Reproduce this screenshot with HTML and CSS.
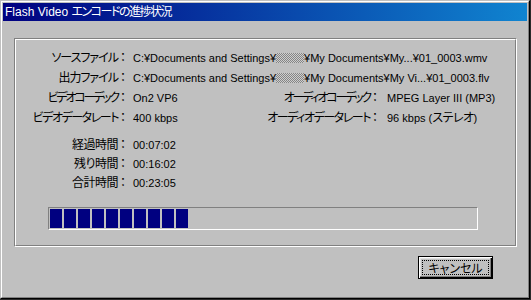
FILE: index.html
```html
<!DOCTYPE html>
<html lang="ja">
<head>
<meta charset="utf-8">
<title>Flash Video エンコードの進捗状況</title>
<link rel="stylesheet" href="styles.css">
</head>
<body>
<div class="win">
  <div class="win-in">
    <div class="title">Flash Video <span class="tk">エンコードの進捗状況</span></div>
    <div class="content">
      <div class="group">
        <div class="group-in">
          <div class="info">
            <div class="lbl"><span class="k">ソースファイル</span><span class="c">：</span></div>
            <div class="val wide">C:¥Documents and Settings¥<span class="mosaic"></span>¥My Documents¥My...¥01_0003.wmv</div>
            <div class="lbl"><span class="k">出力ファイル</span><span class="c">：</span></div>
            <div class="val wide">C:¥Documents and Settings¥<span class="mosaic"></span>¥My Documents¥My Vi...¥01_0003.flv</div>
            <div class="lbl"><span class="k codec">ビデオコーデック</span><span class="c">：</span></div>
            <div class="val">On2 VP6</div>
            <div class="lbl"><span class="k codec">オーディオコーデック</span><span class="c">：</span></div>
            <div class="val val2">MPEG Layer III (MP3)</div>
            <div class="lbl"><span class="k rate">ビデオデータレート</span><span class="c">：</span></div>
            <div class="val">400 kbps</div>
            <div class="lbl"><span class="k rate">オーディオデータレート</span><span class="c">：</span></div>
            <div class="val val2">96 kbps (<span class="k">ステレオ</span>)</div>
          </div>
          <div class="times">
            <div class="lbl"><span class="k kanji">経過時間</span><span class="c">：</span></div>
            <div class="val">00:07:02</div>
            <div class="lbl"><span class="k kanji">残り時間</span><span class="c">：</span></div>
            <div class="val">00:16:02</div>
            <div class="lbl"><span class="k kanji">合計時間</span><span class="c">：</span></div>
            <div class="val">00:23:05</div>
          </div>
          <div class="progress">
            <div class="blk"></div><div class="blk"></div><div class="blk"></div><div class="blk"></div><div class="blk"></div>
            <div class="blk"></div><div class="blk"></div><div class="blk"></div><div class="blk"></div><div class="blk"></div>
          </div>
        </div>
      </div>
      <div class="actions">
        <button class="btn"><span class="focus">キャンセル</span></button>
      </div>
    </div>
  </div>
</div>
</body>
</html>
```
FILE: styles.css
```css
html, body {
  margin: 0;
  padding: 0;
}
body {
  width: 531px;
  height: 300px;
  overflow: hidden;
  background: #2a2a2a;
  font-family: "Liberation Sans", "Noto Sans CJK JP", sans-serif;
  font-size: 11px;
  color: #000;
}
.win {
  width: 530px;
  height: 299px;
  box-sizing: border-box;
  border: 1px solid;
  border-color: #c0c0c0 #000 #000 #c0c0c0;
  background: #c0c0c0;
}
.win-in {
  height: 100%;
  box-sizing: border-box;
  border: 1px solid;
  border-color: #fff #808080 #808080 #fff;
  padding: 1px;
}
.title {
  height: 18px;
  line-height: 18px;
  padding-left: 2px;
  background: linear-gradient(to right, #000080, #1084d0);
  color: #fff;
  font-size: 12px;
  white-space: nowrap;
}
.tk {
  font-feature-settings: "palt";
  letter-spacing: -1.5px;
}
.content {
  padding: 17px 10px 0 11px;
}
.group {
  height: 209px;
  box-sizing: border-box;
  border: 1px solid;
  border-color: #808080 #fff #fff #808080;
}
.group-in {
  height: 100%;
  box-sizing: border-box;
  border: 1px solid;
  border-color: #fff #808080 #808080 #fff;
}
.info {
  margin-top: 8px;
  display: grid;
  grid-template-columns: 113px 124px 128px 1fr;
  grid-auto-rows: 20px;
  line-height: 20px;
  white-space: nowrap;
}
.times {
  margin-top: 8px;
  display: grid;
  grid-template-columns: 113px 1fr;
  grid-auto-rows: 19px;
  line-height: 19px;
}
.lbl {
  text-align: right;
  font-size: 12px;
  white-space: nowrap;
}
.k {
  font-feature-settings: "palt";
  letter-spacing: -1px;
}
.k.codec {
  letter-spacing: -2.2px;
}
.k.rate {
  letter-spacing: -1.45px;
}
.k.kanji {
  letter-spacing: -0.5px;
}
.c {
  margin-left: -1px;
}
.val {
  padding-left: 4px;
}
.val2 {
  padding-left: 6px;
}
.val .k {
  font-size: 12px;
  letter-spacing: -0.5px;
}
.wide {
  grid-column: 2 / 5;
}
.mosaic {
  display: inline-block;
  width: 28px;
  height: 10px;
  vertical-align: -1px;
  background: repeating-conic-gradient(#7a7a7a 0 25%, #d0d0d0 0 50%) 0 0 / 2px 2px;
  opacity: 0.85;
}
.progress {
  margin: 14px 0 0 32px;
  width: 430px;
  height: 23px;
  box-sizing: border-box;
  border: 1px solid;
  border-color: #808080 #fff #fff #808080;
  padding: 1px;
  display: flex;
  gap: 2px;
}
.blk {
  width: 12px;
  height: 19px;
  background: #000080;
}
.actions {
  display: flex;
  justify-content: flex-end;
  padding-right: 24px;
  margin-top: 9px;
}
.btn {
  width: 75px;
  height: 23px;
  box-sizing: border-box;
  margin: 0;
  padding: 3px;
  border: 1px solid #000;
  background: #c0c0c0;
  box-shadow: inset 1px 1px #fff, inset -1px -1px #000, inset -2px -2px #808080, inset 2px 2px #dfdfdf;
  font-family: "Noto Sans CJK JP", sans-serif;
  font-size: 12px;
  color: #000;
  display: flex;
}
.focus {
  flex: 1;
  border: 1px dotted #000;
  line-height: 13px;
  text-align: center;
  font-feature-settings: "palt";
}
```
